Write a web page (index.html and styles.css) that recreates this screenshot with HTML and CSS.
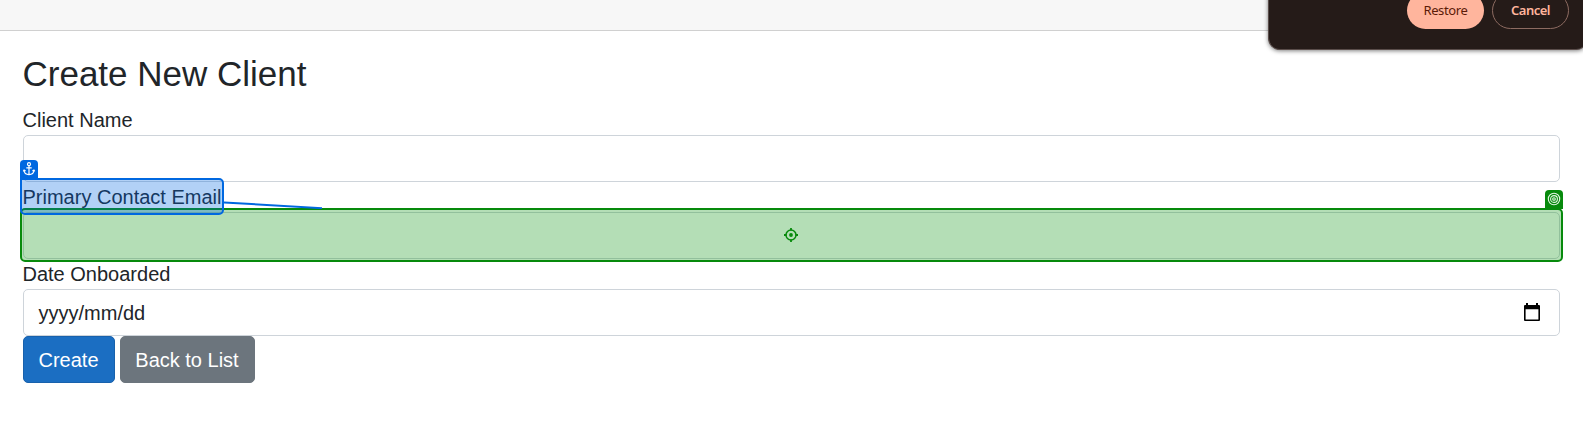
FILE: index.html
```html
<!DOCTYPE html>
<html lang="en">
<head>
<meta charset="utf-8">
<title>Create New Client</title>
<link rel="stylesheet" href="styles.css">
</head>
<body>
<header class="topbar"></header>
<main class="content">
  <h1 class="title">Create New Client</h1>
  <form class="form">
    <label class="label" for="name">Client Name</label>
    <input class="control" id="name" type="text">
    <label class="label" for="email">Primary Contact Email</label>
    <input class="control" id="email" type="text">
    <label class="label">Date Onboarded</label>
    <div class="control date">
      <span>yyyy/mm/dd</span>
      <svg class="calendar" viewBox="0 0 16 18"><path d="M2 0h2v2h8V0h2v2h1q1 0 1 1v14q0 1-1 1H1q-1 0-1-1V3q0-1 1-1h1zM1.6 6.2v10.2h12.8V6.2z" fill="#000" fill-rule="evenodd"/></svg>
    </div>
    <div class="actions">
      <button class="btn primary" type="button">Create</button>
      <button class="btn secondary" type="button">Back to List</button>
    </div>
  </form>
</main>

<div class="target-box">
  <svg class="crosshair" viewBox="0 0 14 14" fill="none" stroke="#078a0c"><circle cx="7" cy="7" r="5" stroke-width="1.5"/><path d="M7 0v2.5M7 11.5V14M0 7h2.5M11.5 7H14" stroke-width="1.8"/><circle cx="7" cy="7" r="1.9" fill="#078a0c" stroke="none"/></svg>
</div>
<div class="tag target-tag">
  <svg class="tag-icon" viewBox="0 0 14 14" fill="none" stroke="#e4f5e4" stroke-width="1.1"><circle cx="7" cy="7" r="5.7"/><circle cx="7" cy="7" r="3.4"/><circle cx="7" cy="7" r="1.3"/></svg>
</div>
<svg class="connector" viewBox="0 0 99 8"><path d="M0 1.5L98 7.2" stroke="#0068e0" stroke-width="2"/></svg>
<div class="anchor-box"></div>
<div class="tag anchor-tag">
  <svg class="tag-icon" viewBox="0 0 14 14" fill="none" stroke="#fff" stroke-width="1.2"><circle cx="7" cy="2.2" r="1.5"/><path d="M7 3.700v9M4.300 5.800h5.400M2 8.200c.2 2.700 2 4.300 5 4.400 3-.1 4.800-1.700 5-4.400M1.300 9.400L2.100 8l1.500 1M12.700 9.400L11.900 8l-1.500 1"/></svg>
</div>

<div class="dialog">
  <button class="pill restore" type="button">Restore</button>
  <button class="pill cancel" type="button">Cancel</button>
</div>
</body>
</html>
```

FILE: styles.css
```css
* { box-sizing: border-box; }
body {
  margin: 0;
  height: 421px;
  position: relative;
  overflow: hidden;
  background: #fff;
  color: #212529;
  font: 20px/30px "Liberation Sans", Arial, sans-serif;
}
.topbar { height: 31px; background: #f7f7f7; border-bottom: 1px solid #d0d0d0; }
.content { padding: 22px 23px 0; }
.title { margin: 0 0 10px; font-size: 35px; line-height: 42px; font-weight: 400; text-indent: -.5px; }
.form { display: flex; flex-direction: column; }
.label { height: 30px; text-indent: -.5px; }
.control {
  width: 100%;
  height: 47px;
  padding: 0 15px;
  border: 1px solid #ced4da;
  border-radius: 5px;
  background: #fff;
  font: inherit;
}
.date { display: flex; align-items: center; justify-content: space-between; text-indent: -.5px; }
.calendar { width: 16px; height: 18px; margin: -1px 4px 0 0; }
.actions { display: flex; gap: 5px; }
.btn {
  height: 47px;
  padding: 0;
  border: 1px solid;
  border-radius: 5px;
  color: #fff;
  font: inherit;
  white-space: nowrap;
  text-indent: -1px;
}
.primary { width: 92px; background: #1b6ec2; border-color: #1861ac; }
.secondary { width: 135px; background: #6c757d; border-color: #6c757d; }

.target-box {
  position: absolute;
  left: 20px;
  top: 208px;
  width: 1543px;
  height: 54px;
  display: flex;
  align-items: center;
  justify-content: center;
  border: 2px solid #078a0c;
  border-radius: 5px;
  background: rgba(7, 146, 12, .3);
}
.crosshair { width: 14px; height: 14px; margin-right: 1px; }
.tag {
  position: absolute;
  width: 18px;
  display: flex;
  justify-content: center;
  border-radius: 4px 4px 0 0;
}
.tag-icon { width: 14px; height: 14px; }
.target-tag { left: 1545px; top: 190px; height: 19px; padding-top: 2px; background: #078a0c; }
.connector { position: absolute; left: 224px; top: 201px; width: 99px; height: 8px; }
.anchor-box {
  position: absolute;
  left: 20px;
  top: 178px;
  width: 204px;
  height: 37px;
  border: 2px solid #0068e0;
  border-radius: 0 5px 5px 5px;
  background: rgba(0, 104, 224, .3);
}
.anchor-tag { left: 20px; top: 160px; height: 19px; padding-top: 2px; background: #0068e0; }

.dialog {
  position: absolute;
  left: 1268px;
  top: -20px;
  width: 320px;
  height: 70px;
  padding: 12px 18px 0 0;
  display: flex;
  justify-content: flex-end;
  gap: 8px;
  border: 1px solid #5a4d4a;
  border-top: 0;
  border-radius: 0 0 12px 12px;
  background: #251b18;
  box-shadow: 0 1px 4px rgba(0, 0, 0, .5);
}
.pill {
  width: 77px;
  height: 37px;
  padding: 0 0 2px;
  border-radius: 19px;
  font: 13px/18px "Noto Sans", "Open Sans", sans-serif;
  letter-spacing: -.35px;
}
.restore { border: 0; background: #ffb59d; color: #5b1b08; }
.cancel { border: 1px solid #8d6b61; background: transparent; color: #ffb59d; font-weight: 600; letter-spacing: -.5px; }
```
